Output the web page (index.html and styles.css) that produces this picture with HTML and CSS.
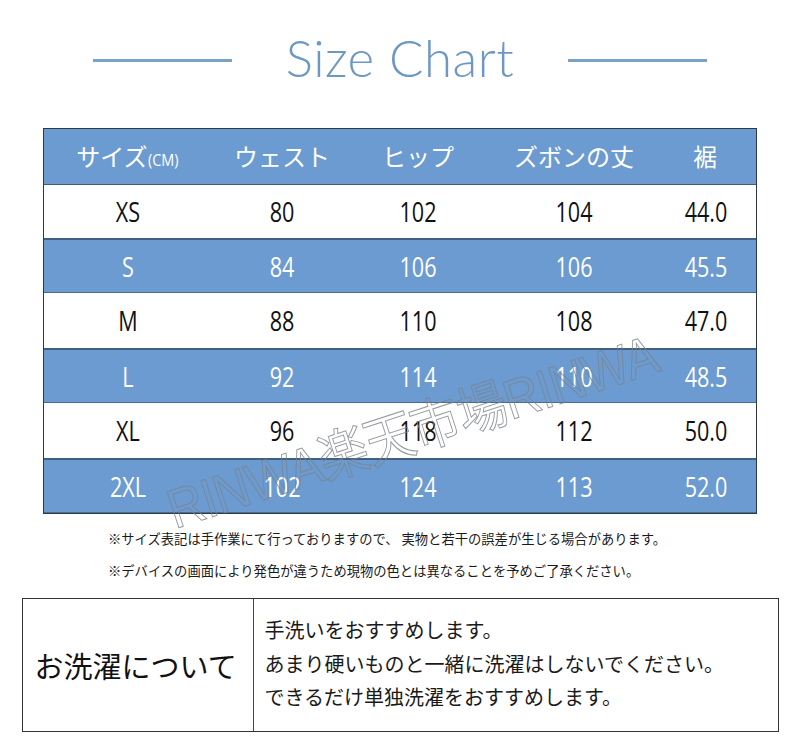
FILE: index.html
```html
<!DOCTYPE html>
<html lang="ja">
<head>
<meta charset="utf-8">
<title>Size Chart</title>
<link rel="stylesheet" href="styles.css">
</head>
<body>
<div class="page">
  <header class="title-row">
    <span class="rule"></span>
    <h1 class="title">Size Chart</h1>
    <span class="rule"></span>
  </header>

  <div class="chart">
    <div class="row head">
      <div class="cell">サイズ<span class="unit">(CM)</span></div>
      <div class="cell">ウェスト</div>
      <div class="cell">ヒップ</div>
      <div class="cell">ズボンの丈</div>
      <div class="cell last">裾</div>
    </div>
    <div class="row white first">
      <div class="cell num">XS</div><div class="cell num">80</div><div class="cell num">102</div><div class="cell num">104</div><div class="cell num last">44.0</div>
    </div>
    <div class="row blue">
      <div class="cell num">S</div><div class="cell num">84</div><div class="cell num">106</div><div class="cell num">106</div><div class="cell num last">45.5</div>
    </div>
    <div class="row white">
      <div class="cell num">M</div><div class="cell num">88</div><div class="cell num">110</div><div class="cell num">108</div><div class="cell num last">47.0</div>
    </div>
    <div class="row blue">
      <div class="cell num">L</div><div class="cell num">92</div><div class="cell num">114</div><div class="cell num">110</div><div class="cell num last">48.5</div>
    </div>
    <div class="row white">
      <div class="cell num">XL</div><div class="cell num">96</div><div class="cell num">118</div><div class="cell num">112</div><div class="cell num last">50.0</div>
    </div>
    <div class="row blue">
      <div class="cell num">2XL</div><div class="cell num">102</div><div class="cell num">124</div><div class="cell num">113</div><div class="cell num last">52.0</div>
    </div>
    <div class="watermark">RINWA楽天市場RINWA</div>
  </div>

  <div class="notes">
    <p>※サイズ表記は手作業にて行っておりますので、 実物と若干の誤差が生じる場合があります。</p>
    <p>※デバイスの画面により発色が違うため現物の色とは異なることを予めご了承ください。</p>
  </div>

  <div class="care">
    <div class="care-label">お洗濯について</div>
    <div class="care-body">
      <p>手洗いをおすすめします。</p>
      <p>あまり硬いものと一緒に洗濯はしないでください。</p>
      <p>できるだけ単独洗濯をおすすめします。</p>
    </div>
  </div>
</div>
</body>
</html>
```

FILE: styles.css
```css
* { box-sizing: border-box; }

html, body {
  margin: 0;
  padding: 0;
  background: #ffffff;
}

body {
  font-family: "Noto Sans CJK JP", "Noto Sans", sans-serif;
  color: #111;
  width: 800px;
  height: 751px;
  overflow: hidden;
}

.page {
  width: 800px;
}

/* Title */
.title-row {
  height: 114px;
  margin-bottom: 14px;
  display: flex;
  align-items: center;
  justify-content: center;
  gap: 54px;
}

.rule {
  width: 139px;
  height: 3px;
  background: #7aa1c8;
  margin-top: 6px;
}

.title {
  margin: 0;
  font-family: "Lato", "DejaVu Sans", sans-serif;
  font-weight: 300;
  font-size: 51px;
  letter-spacing: 0.5px;
  color: #6d98c4;
  line-height: 1;
}

/* Chart */
.chart {
  position: relative;
  width: 714px;
  margin: 0 auto;
  border: 1px solid #2d3b48;
}

.row {
  display: grid;
  grid-template-columns: 168px 140px 132px 180px 92px;
  height: 55px;
  align-items: center;
  text-align: center;
}

.row.head {
  height: 56px;
  background: #6b9bd0;
  color: #ffffff;
  border-bottom: 1px solid #3e5d7c;
}

.row.first { height: 53px; }

.row.white {
  background: #ffffff;
  color: #111;
}

.row.blue {
  background: #6b9bd0;
  color: #ffffff;
  border-top: 2px solid #40607f;
  border-bottom: 1px solid #4a6c8e;
}

.cell {
  line-height: 1;
}

.cell.last {
  padding-right: 10px;
}

.head .cell {
  font-weight: 400;
  font-size: 24px;
  padding-bottom: 2px;
  white-space: nowrap;
}

.unit {
  display: inline-block;
  font-family: "Open Sans", "Liberation Sans", sans-serif;
  font-size: 17px;
  transform: scaleX(0.85);
  transform-origin: left center;
  margin-right: -4px;
}

.cell.num {
  font-family: "Open Sans", "Liberation Sans", sans-serif;
  font-size: 27px;
  font-weight: 400;
  transform: scaleX(0.8);
}

.watermark {
  position: absolute;
  left: 131px;
  top: 354px;
  font-family: "Liberation Sans", "Noto Sans CJK JP", sans-serif;
  font-size: 55px;
  line-height: 1;
  white-space: nowrap;
  color: transparent;
  -webkit-text-stroke: 1px rgba(125, 130, 138, 0.8);
  transform: rotate(-18deg) scaleX(0.9);
  transform-origin: 0 46px;
  letter-spacing: -1px;
  pointer-events: none;
}

/* Notes */
.notes {
  padding: 9px 0 0 108px;
  height: 84px;
}

.notes p {
  margin: 0;
  font-size: 13.3px;
  line-height: 32px;
  color: #1a1a1a;
  white-space: nowrap;
}

/* Care box */
.care {
  width: 757px;
  height: 134px;
  margin: 0 auto;
  border: 1px solid #333;
  display: flex;
}

.care-label {
  width: 231px;
  flex: none;
  border-right: 1px solid #444;
  display: flex;
  align-items: center;
  padding-left: 12px;
  font-size: 29px;
  color: #111;
  white-space: nowrap;
}

.care-body {
  padding: 14px 0 0 11px;
}

.care-body p {
  margin: 0;
  font-size: 20px;
  line-height: 33.5px;
  color: #1a1a1a;
  white-space: nowrap;
}
```
